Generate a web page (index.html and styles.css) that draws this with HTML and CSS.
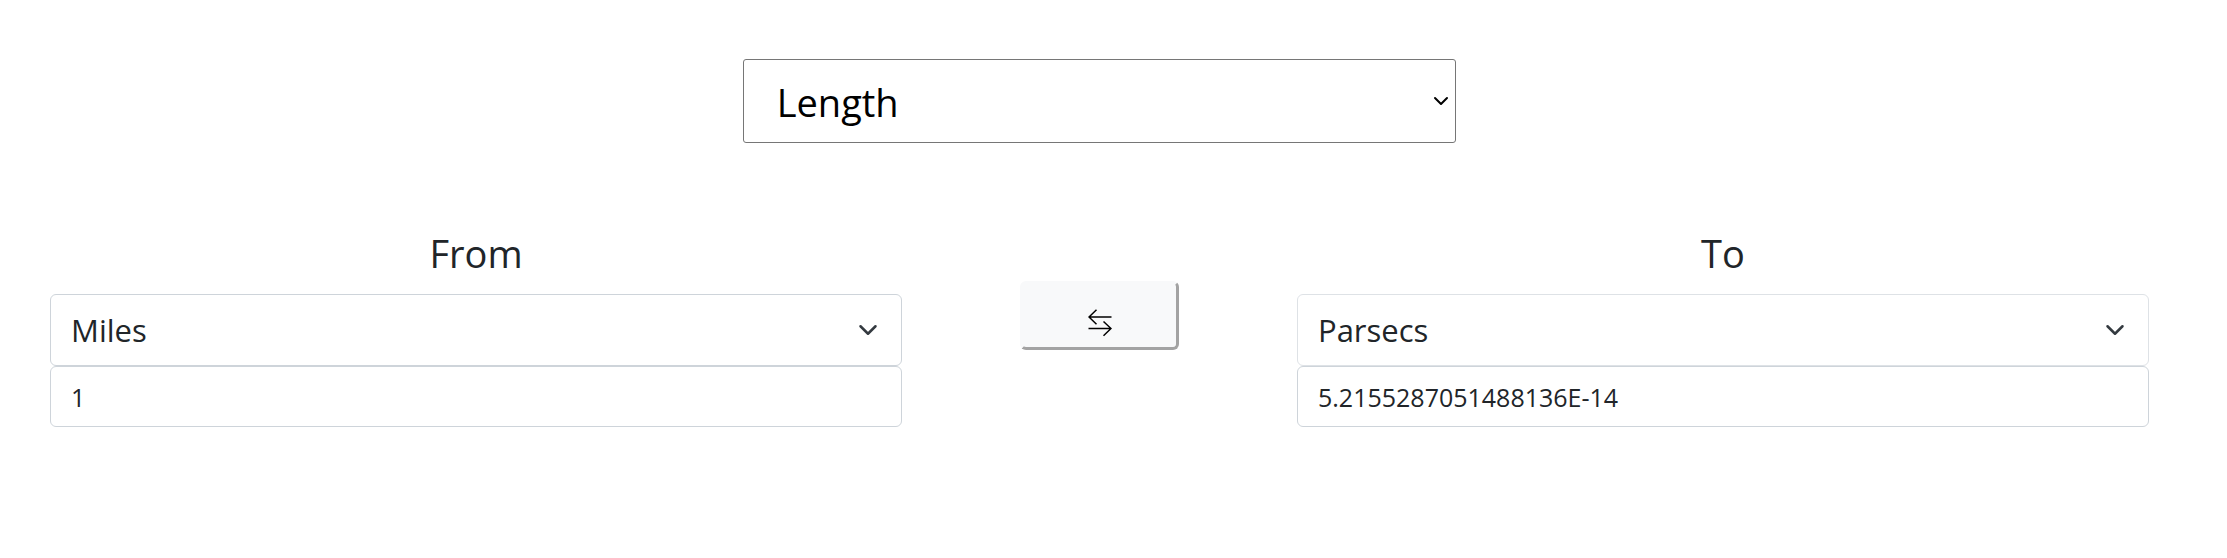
FILE: index.html
```html
<!DOCTYPE html>
<html lang="en">
<head>
<meta charset="utf-8">
<meta name="viewport" content="width=device-width, initial-scale=1">
<title>Unit Converter</title>
<link rel="stylesheet" href="styles.css">
</head>
<body>
<main class="converter">
  <div class="picker category">
    <select class="category-select" aria-label="Category">
      <option>Length</option>
      <option>Mass</option>
      <option>Temperature</option>
    </select>
    <svg class="chevron category-chevron" viewBox="0 0 16 16" aria-hidden="true"><path d="M2 5l6 6 6-6"/></svg>
  </div>
  <div class="units">
    <section class="unit">
      <label class="unit-title" for="from-unit">From</label>
      <div class="picker">
        <select class="field unit-select" id="from-unit">
          <option>Miles</option>
          <option>Parsecs</option>
        </select>
        <svg class="chevron unit-chevron" viewBox="0 0 16 16" aria-hidden="true"><path d="M2 5l6 6 6-6"/></svg>
      </div>
      <input class="field unit-value" type="text" value="1" aria-label="From value">
    </section>
    <button class="swap" type="button" aria-label="Swap units">
      <svg class="swap-icon" viewBox="0 0 24 28" aria-hidden="true"><path d="M23.500 8H1M8.500 .8L1 8l7.500 7.200M.5 19.500H23M15.500 12.500L23 19.500l-7.500 7.200"/></svg>
    </button>
    <section class="unit">
      <label class="unit-title" for="to-unit">To</label>
      <div class="picker">
        <select class="field unit-select target-select" id="to-unit">
          <option>Parsecs</option>
          <option>Miles</option>
        </select>
        <svg class="chevron unit-chevron" viewBox="0 0 16 16" aria-hidden="true"><path d="M2 5l6 6 6-6"/></svg>
      </div>
      <input class="field unit-value" type="text" value="5.2155287051488136E-14" aria-label="To value" readonly>
    </section>
  </div>
</main>
</body>
</html>
```
FILE: styles.css
```css
*,
*::before,
*::after {
  box-sizing: border-box;
}

body {
  margin: 0;
  background: #fff;
  color: #212529;
  font-family: "Segoe UI", "Open Sans", "Noto Sans", sans-serif;
}

.converter {
  padding: 59px 78px 59px 50px;
}

.picker {
  position: relative;
}

.category {
  width: 34%;
  margin: 0 auto 82px;
}

.category-select {
  display: block;
  width: 100%;
  height: 84px;
  padding: 2px 48px 0 33px;
  border: 1px solid #767676;
  border-radius: 3px;
  background: #fff;
  color: #000;
  font: inherit;
  font-size: 38px;
  appearance: none;
}

.chevron {
  position: absolute;
  top: 50%;
  transform: translateY(-50%);
  fill: none;
  pointer-events: none;
  stroke-linecap: round;
  stroke-linejoin: round;
}

.category-chevron {
  right: 7px;
  width: 16px;
  height: 16px;
  stroke: #000;
  stroke-width: 2;
}

.units {
  display: grid;
  grid-template-columns: 1fr 159px 1fr;
  column-gap: 118px;
}

.unit {
  display: flex;
  flex-direction: column;
}

.unit-title {
  margin-bottom: 13px;
  font-size: 38px;
  line-height: 56px;
  text-align: center;
}

.field {
  display: block;
  width: 100%;
  border: 1px solid #ced4da;
  border-radius: 6px;
  background: #fff;
  color: #212529;
  font: inherit;
}

.unit-select {
  height: 72px;
  padding: 0 72px 0 20px;
  font-size: 31px;
  appearance: none;
}

.target-select {
  border-color: #dee2e6;
}

.unit-chevron {
  right: 24px;
  width: 20px;
  height: 20px;
  stroke: #343a40;
  stroke-width: 2;
}

.unit-value {
  height: 61px;
  padding: 0 20px;
  font-size: 25px;
}

.swap {
  align-self: start;
  height: 69px;
  margin-top: 56px;
  padding: 14px 0 0;
  border: 3px solid;
  border-color: #f8f9fa #a3a3a3 #a3a3a3 #f8f9fa;
  border-radius: 6px;
  background: #f8f9fa;
}

.swap-icon {
  display: block;
  width: 24px;
  height: 28px;
  margin: 0 auto;
  fill: none;
  stroke: #000;
  stroke-width: 1.5;
}
```
